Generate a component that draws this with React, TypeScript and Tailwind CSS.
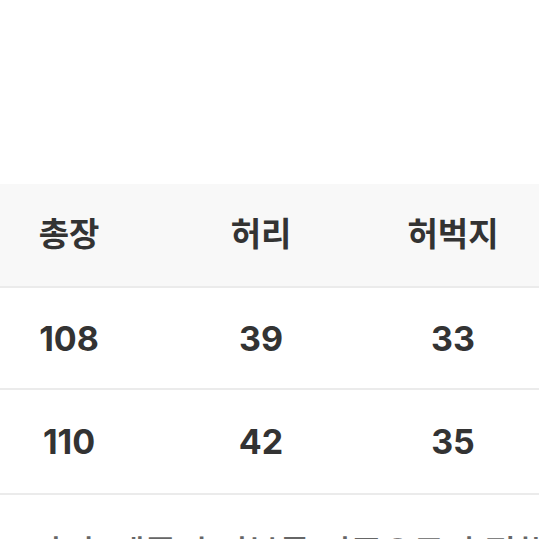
import React from 'react';

const headers = ['총장', '허리', '허벅지'];
const rows = [
  { h: 'h-[102px]', v: ['108', '39', '33'] },
  { h: 'h-[105px]', v: ['110', '42', '35'] },
];

export default function App() {
  return (
    <div
      className="w-[539px] h-[539px] overflow-hidden bg-white text-[#333333]"
      style={{ fontFamily: 'Inter, "Noto Sans CJK KR", sans-serif' }}
    >
      <div className="h-[184px]" />
      <div className="ml-[-27px] w-[576px]">
        <div className="grid grid-cols-3 h-[104px] items-center bg-[#f8f8f8] border-b-2 border-[#ebebeb]">
          {headers.map((h) => (
            <div key={h} className="text-center text-[33px] font-semibold">
              {h}
            </div>
          ))}
        </div>
        {rows.map((r, i) => (
          <div
            key={i}
            className={`grid grid-cols-3 ${r.h} items-center border-b-2 border-[#ebebeb]`}
          >
            {r.v.map((v, j) => (
              <div key={j} className="text-center text-[34px] font-bold">
                {v}
              </div>
            ))}
          </div>
        ))}
      </div>
      <p className="mt-[32px] pl-[32px] whitespace-nowrap text-[34px] font-medium text-[#666666]">
        사진, 제품의 리뷰를 기준으로 측정했
      </p>
    </div>
  );
}
